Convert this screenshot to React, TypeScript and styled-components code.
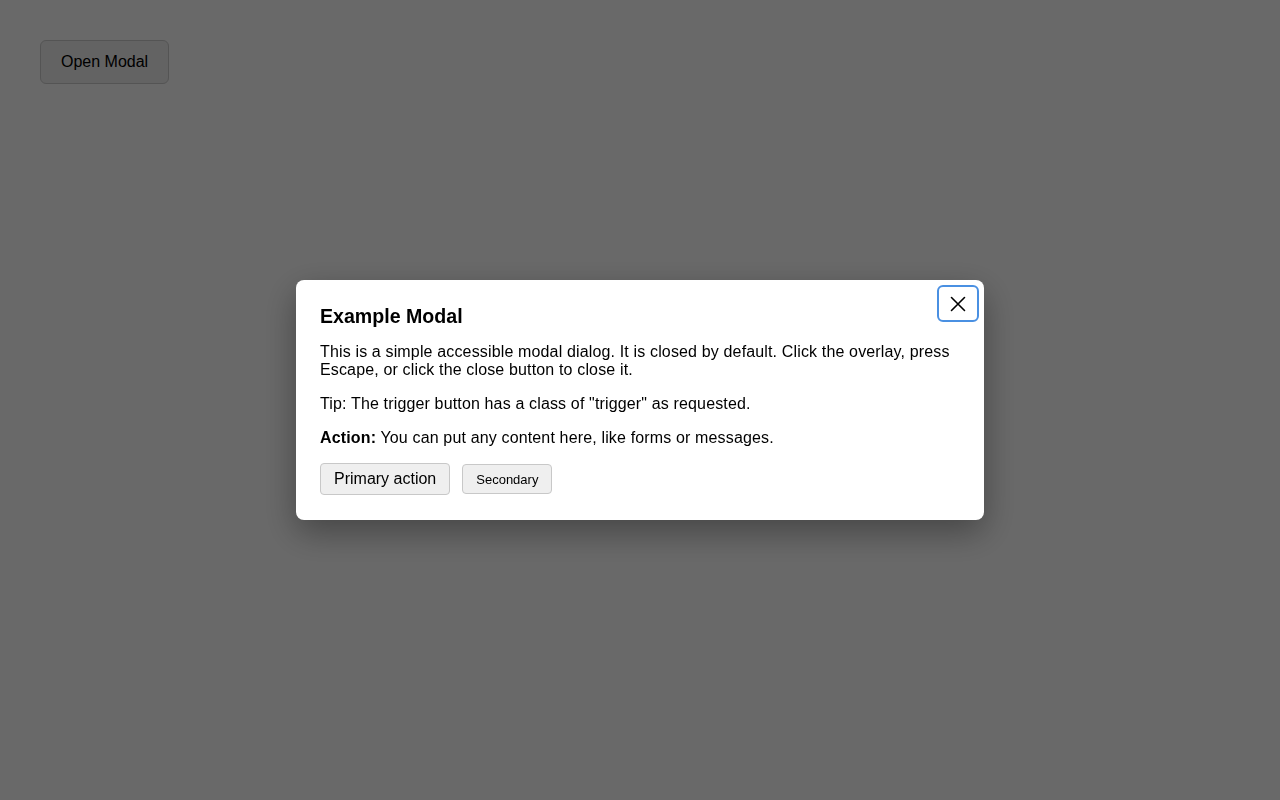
import styled, { createGlobalStyle } from "styled-components";

const GlobalStyle = createGlobalStyle`
  html, body {
    margin: 0;
    padding: 0;
    background: #ffffff;
    font-family: "Liberation Sans", Arial, sans-serif;
    color: #000;
  }
`;

const Page = styled.div`
  min-height: 100vh;
  padding: 40px;
  box-sizing: border-box;
`;

const Trigger = styled.button`
  font-family: "Liberation Sans", Arial, sans-serif;
  font-size: 16px;
  height: 44px;
  padding: 0 20px;
  background: #f0f0f0;
  border: 1px solid #cccccc;
  border-radius: 6px;
  color: #000;
  cursor: pointer;
`;

const Overlay = styled.div`
  position: fixed;
  inset: 0;
  background: rgba(0, 0, 0, 0.59);
  display: flex;
  align-items: center;
  justify-content: center;
`;

const Dialog = styled.div`
  position: relative;
  width: 688px;
  box-sizing: border-box;
  padding: 24px 24px 25px;
  background: #ffffff;
  border-radius: 8px;
  box-shadow: 0 12px 34px rgba(0, 0, 0, 0.35);
`;

const Title = styled.h2`
  margin: 0 0 15px;
  font-size: 19.6px;
  line-height: 24px;
  font-weight: 700;
`;

const Text = styled.p`
  margin: 0 0 16px;
  font-size: 16px;
  line-height: 18px;
  letter-spacing: 0.15px;
`;

const Actions = styled.div`
  display: flex;
  align-items: center;
  gap: 12px;
`;

const ActionButton = styled.button<{ $size: "large" | "small" }>`
  font-family: "Liberation Sans", Arial, sans-serif;
  font-size: ${(p) => (p.$size === "large" ? "16px" : "13px")};
  height: ${(p) => (p.$size === "large" ? "32px" : "30px")};
  padding: 0 13px;
  background: #efefef;
  border: 1px solid #c8c8c8;
  border-radius: 4px;
  color: #000;
  cursor: pointer;
`;

const CloseButton = styled.button`
  position: absolute;
  top: 5px;
  right: 5px;
  width: 42px;
  height: 37px;
  display: flex;
  align-items: center;
  justify-content: center;
  padding: 0;
  background: #ffffff;
  border: 2px solid #4a90e2;
  border-radius: 6px;
  cursor: pointer;
`;

function App() {
  return (
    <>
      <GlobalStyle />
      <Page>
        <Trigger className="trigger">Open Modal</Trigger>
      </Page>
      <Overlay>
        <Dialog role="dialog" aria-modal="true" aria-labelledby="modal-title">
          <CloseButton aria-label="Close">
            <svg width="18" height="18" viewBox="0 0 18 18" fill="none">
              <path
                d="M2.5 2.5L15.5 15.5M15.5 2.5L2.5 15.5"
                stroke="#000"
                strokeWidth="1.6"
                strokeLinecap="round"
              />
            </svg>
          </CloseButton>
          <Title id="modal-title">Example Modal</Title>
          <Text>
            This is a simple accessible modal dialog. It is closed by default.
            Click the overlay, press Escape, or click the close button to close
            it.
          </Text>
          <Text>Tip: The trigger button has a class of "trigger" as requested.</Text>
          <Text>
            <strong>Action:</strong> You can put any content here, like forms or
            messages.
          </Text>
          <Actions>
            <ActionButton $size="large">Primary action</ActionButton>
            <ActionButton $size="small">Secondary</ActionButton>
          </Actions>
        </Dialog>
      </Overlay>
    </>
  );
}

export default App;
